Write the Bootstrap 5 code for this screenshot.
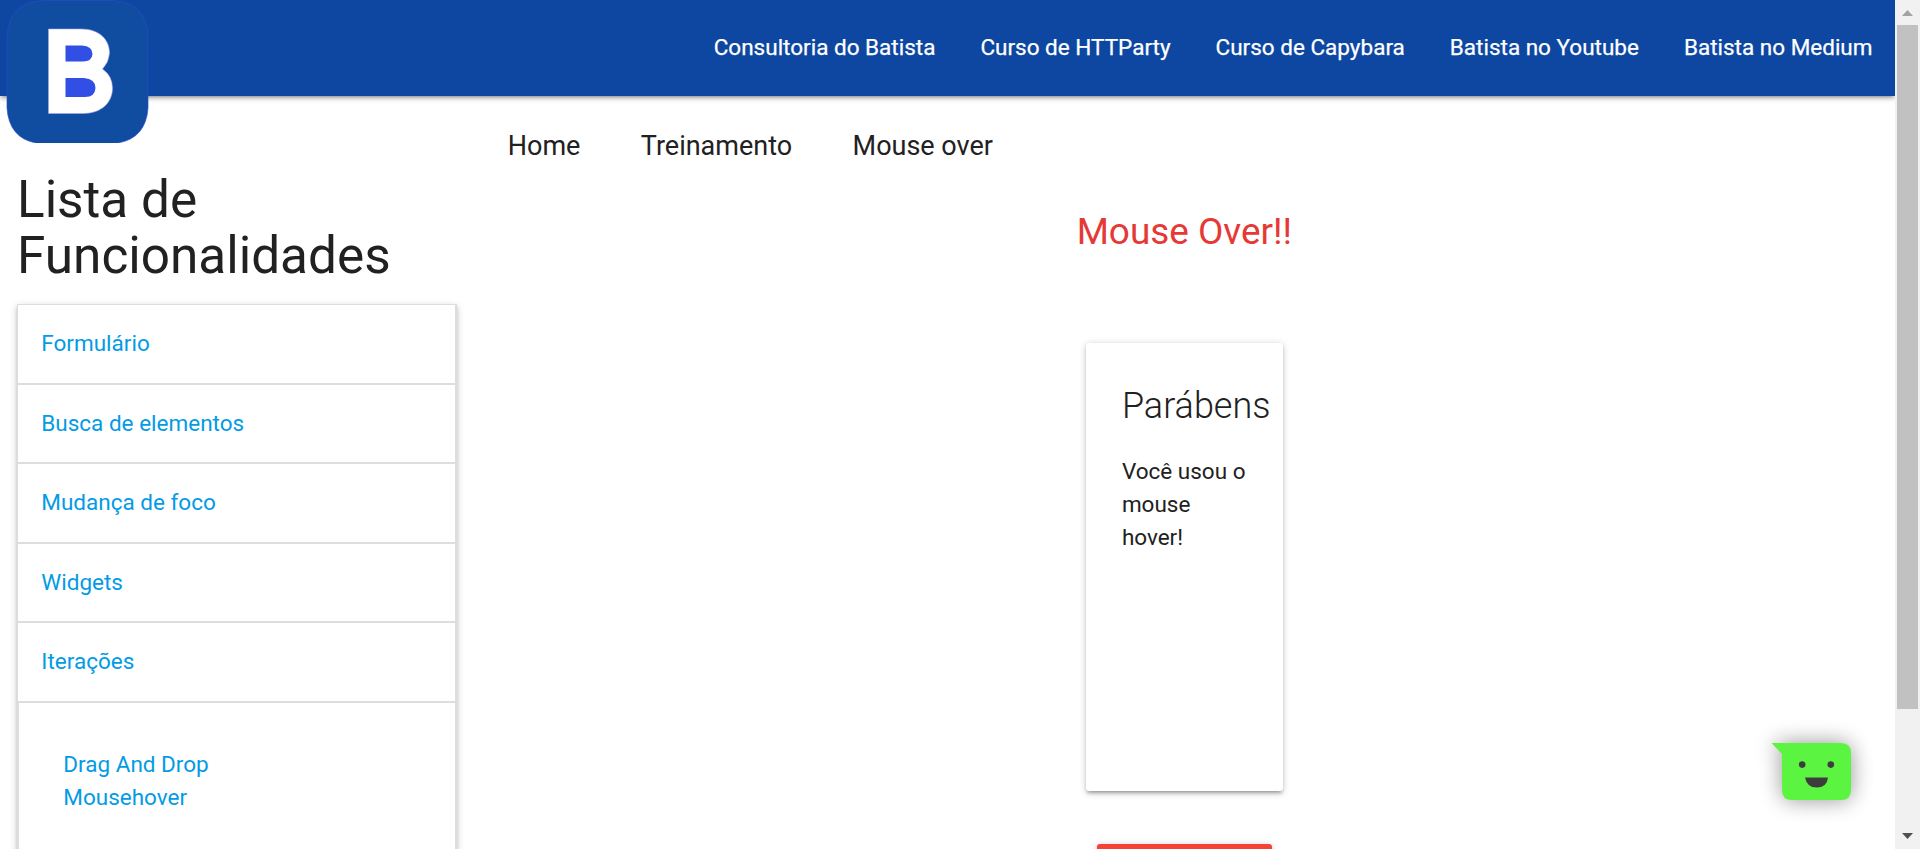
<!DOCTYPE html>
<html lang="pt-BR">
<head>
<meta charset="utf-8">
<meta name="viewport" content="width=device-width, initial-scale=1">
<title>Mouse over</title>
<link href="https://cdn.jsdelivr.net/npm/bootstrap@5.3.0/dist/css/bootstrap.min.css" rel="stylesheet">
<style>
html,body{height:100%;overflow:hidden}
body{font-family:Roboto,"Liberation Sans",sans-serif;font-size:22.5px;line-height:33px;color:#212121;background:#fff}
a{text-decoration:none}
.page-area{height:849px;overflow:hidden;position:relative;min-width:0}
.topbar{height:96px;background:#0d47a1;padding:0;box-shadow:0 3px 3px 0 rgba(0,0,0,.14),0 4.5px 1.5px -3px rgba(0,0,0,.12),0 1.5px 7.5px 0 rgba(0,0,0,.2);position:relative;z-index:2}
.brand-logo{position:absolute;left:6px;top:0;width:143px;height:143px}
.topbar .nav-link{color:#fff;padding:0 22.5px;line-height:94px;font-size:22.5px;white-space:nowrap;-webkit-text-stroke:.25px #fff}
.side-col{width:473.75px;padding:0 17px}
.side-title{font-size:51.3px;line-height:56.4px;font-weight:400;margin:76px 0 19.2px}
.menu-list{border:1px solid #ddd;border-right-width:2px;border-bottom:0;box-shadow:0 3px 3px 0 rgba(0,0,0,.14),0 4.5px 1.5px -3px rgba(0,0,0,.12),0 1.5px 7.5px 0 rgba(0,0,0,.2);height:600px}
.menu-list a{color:#039be5}
.menu-head{display:block;height:79.6px;line-height:77.6px;padding:0 23.3px;border-bottom:2px solid #ddd}
.menu-sub{padding:45px 44.3px;border-left:1px solid #ddd;height:260px}
.crumbs{padding:33px 34px 0;font-size:27px;line-height:34px;gap:60.4px}
.main-title{font-size:36.9px;line-height:40px;color:#e53935;font-weight:400;margin:49px 0 0}
.result-card{width:197px;height:448px;margin-top:91px;padding:36px;border-radius:3px;background:#fff;box-shadow:0 3px 3px 0 rgba(0,0,0,.14),0 4.5px 1.5px -3px rgba(0,0,0,.12),0 1.5px 7.5px 0 rgba(0,0,0,.2)}
.result-card h2{font-size:36px;line-height:54px;font-weight:300;margin:0 0 22px;white-space:nowrap}
.red-btn{width:175px;height:54px;margin-top:53px;border-radius:3px;background:#f44336;box-shadow:0 3px 3px 0 rgba(0,0,0,.14),0 1.5px 7.5px 0 rgba(0,0,0,.2)}
.chat-bubble{position:absolute;left:1740px;top:700px;width:155px;height:149px;overflow:hidden}
.scroll-rail{width:25px;height:849px;background:#f1f1f1;flex:none}
</style>
</head>
<body>
<div class="d-flex">
  <div class="page-area flex-grow-1">
    <nav class="topbar navbar justify-content-end align-items-start">
      <a class="brand-logo" href="#" aria-label="Batista">
        <svg class="d-block" width="143" height="143" viewBox="0 0 143 143">
          <path d="M37 .5H106Q141 2 142 37V108Q140 138 112 143H30Q3 138 1 108V37Q3 2 37 .5Z" fill="#104ca0"/>
          <path d="M30 143Q3 138 1 108V37Q3 2 37 .5H106Q141 2 142 37V108Q140 138 112 143" fill="none" stroke="#2b4bd0" stroke-opacity=".65"/>
          <path d="M42.500 29H75C94 29 103.500 40 103.500 53Q103 62 96.500 69Q106.500 76 106.500 88C106.500 102 96 113.500 77 113.500H42.500Z" fill="#fff" stroke="#a8a8f4" stroke-width=".6"/>
          <path d="M59.500 45.500H76Q86.500 46 86.500 54Q86 61.500 77 61.500H59.500ZM59.500 78H78Q89.500 79 89.500 88Q89 97 79 97H59.500Z" fill="#314fe4"/>
        </svg>
      </a>
      <ul class="nav flex-nowrap">
        <li class="nav-item"><a class="nav-link" href="#">Consultoria do Batista</a></li>
        <li class="nav-item"><a class="nav-link" href="#">Curso de HTTParty</a></li>
        <li class="nav-item"><a class="nav-link" href="#">Curso de Capybara</a></li>
        <li class="nav-item"><a class="nav-link" href="#">Batista no Youtube</a></li>
        <li class="nav-item"><a class="nav-link" href="#">Batista no Medium</a></li>
      </ul>
    </nav>
    <div class="d-flex">
      <aside class="side-col flex-shrink-0">
        <h1 class="side-title">Lista de Funcionalidades</h1>
        <div class="menu-list">
          <a class="menu-head" href="#">Formulário</a>
          <a class="menu-head" href="#">Busca de elementos</a>
          <a class="menu-head" href="#">Mudança de foco</a>
          <a class="menu-head" href="#">Widgets</a>
          <a class="menu-head" href="#">Iterações</a>
          <div class="menu-sub d-flex flex-column">
            <a href="#">Drag And Drop</a>
            <a href="#">Mousehover</a>
          </div>
        </div>
      </aside>
      <main class="flex-grow-1">
        <div class="crumbs d-flex"><span>Home</span><span>Treinamento</span><span>Mouse over</span></div>
        <div class="d-flex flex-column align-items-center">
          <h2 class="main-title">Mouse Over!!</h2>
          <section class="result-card">
            <h2>Parábens</h2>
            <p class="m-0">Você usou o mouse hover!</p>
          </section>
          <div class="red-btn"></div>
        </div>
      </main>
    </div>
    <svg class="chat-bubble" viewBox="0 0 155 149">
      <defs><filter id="soft" x="-60%" y="-60%" width="220%" height="220%"><feGaussianBlur stdDeviation="11"/></filter></defs>
      <path d="M32 43H101Q111 43 111 53V90Q111 100 101 100H52Q42 100 42 90V54Z" fill="#000" opacity=".42" filter="url(#soft)"/>
      <path d="M31.500 43H101Q111 43 111 53V90Q111 100 101 100H52Q42 100 42 90V54Z" fill="#5bf541"/>
      <circle cx="62.200" cy="64.600" r="3.300" fill="#3c3c3c"/><circle cx="90.800" cy="64.600" r="3.300" fill="#3c3c3c"/>
      <path d="M65 77.500H88Q87 87.500 76.500 87.500Q67 87.500 65 77.500Z" fill="#3c3c3c"/>
    </svg>
  </div>
  <svg class="scroll-rail" viewBox="0 0 25 849">
    <path d="M2 25H23V709H2Z" fill="#c1c1c1"/>
    <path d="M7 16L12.500 10L18 16Z" fill="#a3a3a3"/>
    <path d="M7 833H18L12.500 839Z" fill="#505050"/>
  </svg>
</div>
<script src="https://cdn.jsdelivr.net/npm/bootstrap@5.3.0/dist/js/bootstrap.bundle.min.js"></script>
</body>
</html>
